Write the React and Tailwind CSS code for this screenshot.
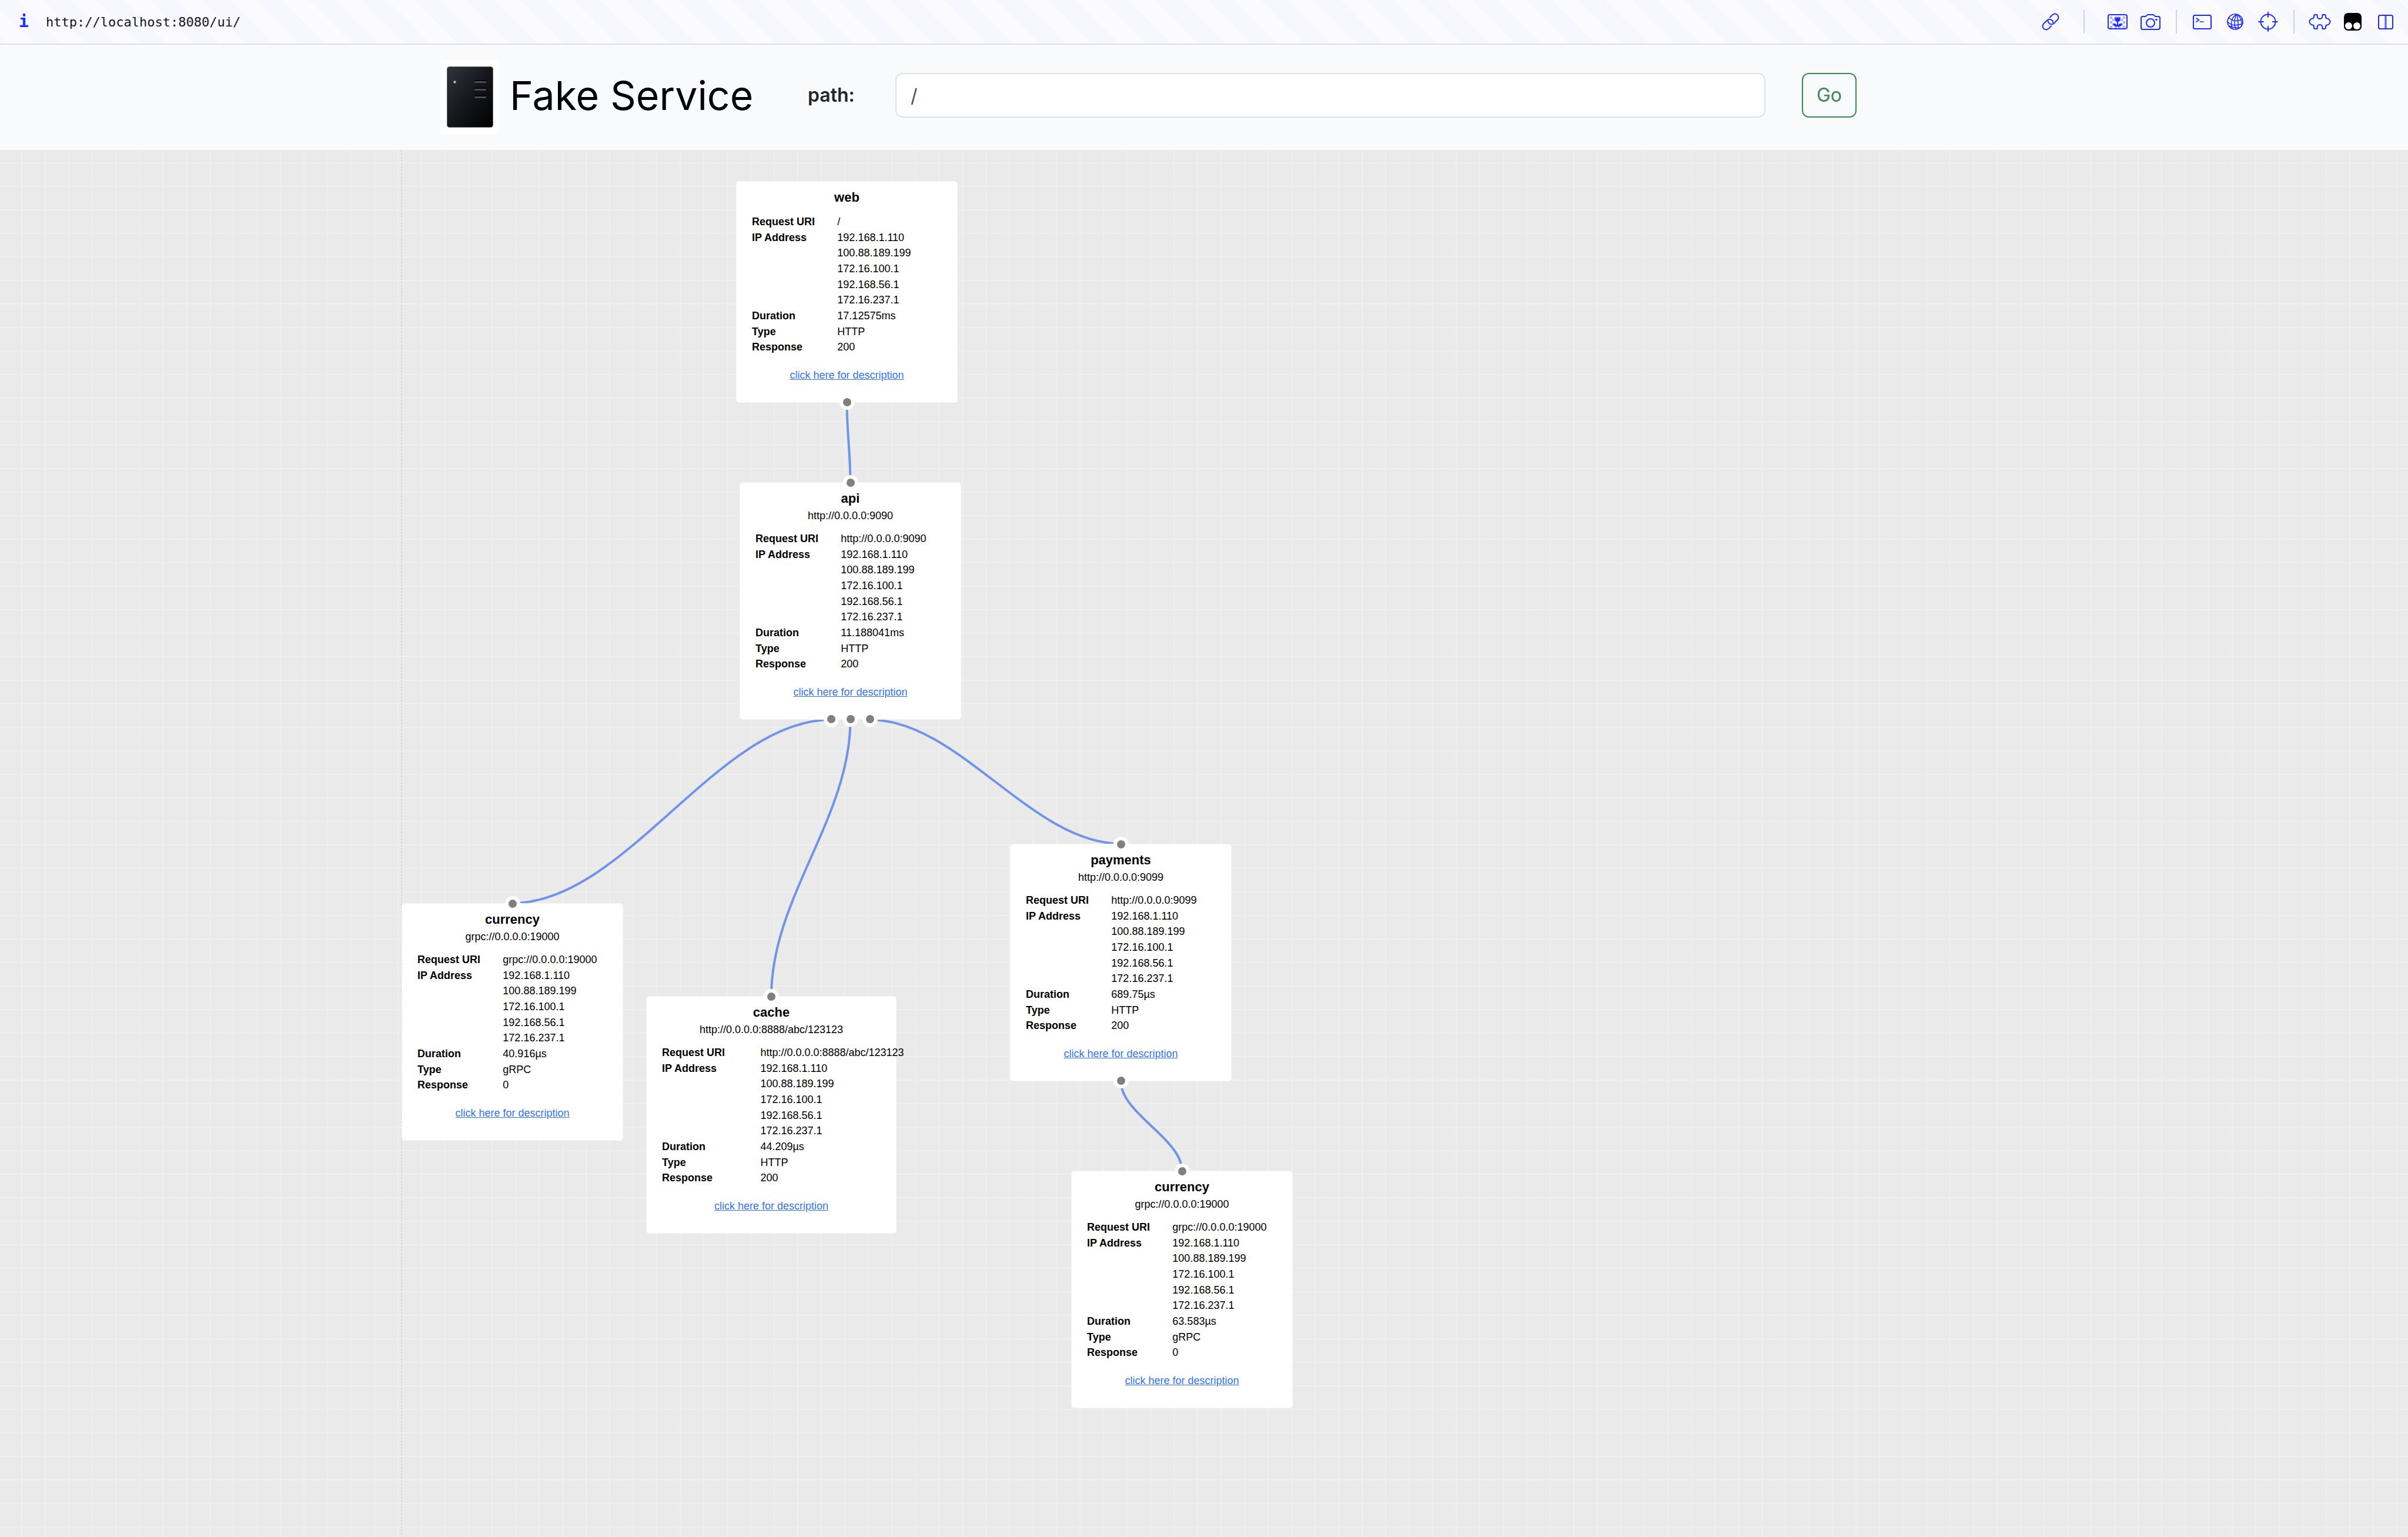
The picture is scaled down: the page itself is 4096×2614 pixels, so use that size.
import React from "react";

const CARD_FONT = "font-['Liberation_Sans',Arial,sans-serif]";

const IPS = ["192.168.1.110", "100.88.189.199", "172.16.100.1", "192.168.56.1", "172.16.237.1"];

const NODES = [
  { id: "web", name: "web", uri: "/", duration: "17.12575ms", type: "HTTP", response: "200", x: 1252, y: 53, w: 377, h: 377, inputs: 0, outputs: 1 },
  { id: "api", name: "api", host: "http://0.0.0.0:9090", uri: "http://0.0.0.0:9090", duration: "11.188041ms", type: "HTTP", response: "200", x: 1258, y: 565, w: 377, h: 404, inputs: 1, outputs: 3 },
  { id: "currency", name: "currency", host: "grpc://0.0.0.0:19000", uri: "grpc://0.0.0.0:19000", duration: "40.916µs", type: "gRPC", response: "0", x: 683, y: 1281, w: 377, h: 404, inputs: 1, outputs: 0 },
  { id: "cache", name: "cache", host: "http://0.0.0.0:8888/abc/123123", uri: "http://0.0.0.0:8888/abc/123123", duration: "44.209µs", type: "HTTP", response: "200", x: 1099, y: 1439, w: 426, h: 404, inputs: 1, outputs: 0 },
  { id: "payments", name: "payments", host: "http://0.0.0.0:9099", uri: "http://0.0.0.0:9099", duration: "689.75µs", type: "HTTP", response: "200", x: 1718, y: 1180, w: 377, h: 404, inputs: 1, outputs: 1 },
  { id: "currency-2", name: "currency", host: "grpc://0.0.0.0:19000", uri: "grpc://0.0.0.0:19000", duration: "63.583µs", type: "gRPC", response: "0", x: 1822, y: 1736, w: 377, h: 404, inputs: 1, outputs: 0 },
];

const LINKS = [
  ["web", 0, "api"],
  ["api", 0, "currency"],
  ["api", 1, "cache"],
  ["api", 2, "payments"],
  ["payments", 0, "currency-2"],
];

const PORT_STEP = 33;
const CURVE = 0.355;

function linkPath([fromId, port, toId]) {
  const from = NODES.find((n) => n.id === fromId);
  const to = NODES.find((n) => n.id === toId);
  const x1 = from.x + from.w / 2 + (port - (from.outputs - 1) / 2) * PORT_STEP;
  const y1 = from.y + from.h;
  const x2 = to.x + to.w / 2;
  const y2 = to.y;
  const dx = x2 - x1;
  const dy = y2 - y1;
  if (Math.abs(dx) > Math.abs(dy)) {
    return `M${x1} ${y1}C${x1 + dx * CURVE} ${y1} ${x2 - dx * CURVE} ${y2} ${x2} ${y2}`;
  }
  return `M${x1} ${y1}C${x1} ${y1 + dy * CURVE} ${x2} ${y2 - dy * CURVE} ${x2} ${y2}`;
}

function Ports({ count, edge }) {
  return (
    <div className={edge === "top" ? "absolute inset-x-0 -top-[13px] flex justify-center gap-[7px]" : "absolute inset-x-0 -bottom-[13px] flex justify-center gap-[7px]"}>
      {Array.from({ length: count }, (_, i) => (
        <span key={i} className="flex size-[26px] items-center justify-center rounded-full bg-white">
          <span className="size-[14px] rounded-full bg-[#808080]" />
        </span>
      ))}
    </div>
  );
}

function Row({ label, children }) {
  return (
    <>
      <dt className="font-bold">{label}</dt>
      <dd className="whitespace-nowrap">{children}</dd>
    </>
  );
}

function Node({ node }) {
  return (
    <article
      className={`absolute rounded-[5px] border border-[#f6f6f6] bg-white px-[26px] pt-[11px] pb-[32px] text-[18px] leading-[27px] text-black ${CARD_FONT}`}
      style={{ left: node.x, top: node.y, width: node.w }}
    >
      <h2 className="text-center text-[22px] leading-[32px] font-bold">{node.name}</h2>
      {node.host && <p className="text-center">{node.host}</p>}
      <dl className="mt-3 grid h-[240px] auto-rows-fr grid-cols-[45%_55%]">
        <Row label="Request URI">{node.uri}</Row>
        {IPS.map((ip, i) => (
          <Row key={ip} label={i === 0 ? "IP Address" : ""}>{ip}</Row>
        ))}
        <Row label="Duration">{node.duration}</Row>
        <Row label="Type">{node.type}</Row>
        <Row label="Response">{node.response}</Row>
      </dl>
      <p className="mt-[21px] text-center">
        <a href="#description" className="text-[#3471f0] underline">click here for description</a>
      </p>
      <Ports count={node.inputs} edge="top" />
      <Ports count={node.outputs} edge="bottom" />
    </article>
  );
}

function Icon({ label, children }) {
  return (
    <button type="button" aria-label={label} className="flex w-14 items-center justify-center text-[#1c2bff]">
      <svg viewBox="-20 -20 40 40" className="size-10" fill="none" stroke="currentColor" strokeWidth="2" strokeLinecap="round" strokeLinejoin="round">
        {children}
      </svg>
    </button>
  );
}

const CHECKS = [
  [-13, -9], [-13, -1], [-13, 7], [-9, -5], [-9, 3], [-5, -9], [-5, 7],
  [1, -9], [1, 7], [5, -5], [5, 3], [9, -9], [9, -1], [9, 7],
];

const LINK_HALF = "M2.1 3.9A6 6 0 0 0 -2.5 -6H-10.5A6 6 0 0 0 -10.5 6H-4.5";

function Toolbar() {
  return (
    <div className="flex h-[76px] items-center border-b-2 border-[#dedee6] bg-[linear-gradient(45deg,#fbfaff_25%,#f7f8ff_25%_50%,#fbfaff_50%_75%,#f7f8ff_75%)] bg-size-[90px_90px] bg-position-[30px_0px] pr-[10px] pl-[32px] font-['DejaVu_Sans_Mono',monospace]">
      <button type="button" aria-label="Site information" className="w-[46px] text-left text-[28px] leading-none font-bold text-[#1c2bff]">i</button>
      <input aria-label="Address" defaultValue="http://localhost:8080/ui/" className="min-w-0 flex-1 bg-transparent text-[22px] text-[#14171a] outline-none" />
      <Icon label="Copy link">
        <g transform="rotate(-45)">
          <path d={LINK_HALF} />
          <path d={LINK_HALF} transform="rotate(180)" />
        </g>
      </Icon>
      <span className="mx-7 h-10 w-0.5 bg-[#cdcffc]" />
      <Icon label="Images">
        <g fill="currentColor" stroke="none" opacity="0.35">
          {CHECKS.map(([x, y]) => <rect key={`${x},${y}`} x={x} y={y} width="4" height="4" />)}
        </g>
        <rect x="-16" y="-12" width="32" height="24" rx="3" />
        <g fill="currentColor" stroke="none">
          <path d="M-4.5 -8Q-3 -7.500 -2.300 -6L0 -8.500L2.300 -6Q3 -7.500 4.500 -8V-4Q4.500 -0.500 1 0V6Q3 2 8 3Q7 8 0 8.500Q-7 8 -8 3Q-3 2 -1 6V0Q-4.500 -0.500 -4.500 -4Z" />
        </g>
      </Icon>
      <Icon label="Screenshot">
        <path d="M-13 -9H-9Q-7.500 -9 -6.500 -10.500Q-5.500 -12 -4 -12H4Q5.500 -12 6.500 -10.500Q7.500 -9 9 -9H13Q16 -9 16 -6V10Q16 13 13 13H-13Q-16 13 -16 10V-6Q-16 -9 -13 -9Z" />
        <circle cx="0" cy="2" r="7" />
        <circle cx="10" cy="-3.500" r="1.700" fill="currentColor" stroke="none" />
      </Icon>
      <span className="mx-[15px] h-10 w-0.5 bg-[#cdcffc]" />
      <Icon label="Console">
        <rect x="-15" y="-11" width="30" height="23" rx="2.500" />
        <path d="M-10 -6L-5.500 -3L-10 0M-3.500 0H2" strokeWidth="1.700" />
      </Icon>
      <Icon label="Network">
        <circle r="13" strokeWidth="1.700" />
        <g strokeWidth="1.500">
          <path d="M3 -12.500C-6 -9 -8 2 -5 12M3 -12.500C-2 -7 -2 5 1 13M3 -12.500C4 -6 6 3 5 12M3 -12.500C9 -8 12 -2 11 7" />
          <path d="M-11 -7Q-2 2 12 -4M-13 0Q-4 10 13 3M-10 7Q-2 11 8 10" />
        </g>
      </Icon>
      <Icon label="Inspect">
        <circle r="12.500" />
        <path d="M0 -16V-8M0 8V16M-16 0H-8M8 0H16" />
      </Icon>
      <span className="mx-[15px] h-10 w-0.5 bg-[#cdcffc]" />
      <Icon label="Extensions">
        <path d="M-4.500 -12H-8Q-10 -12 -10 -10V-8Q-10 -6 -12 -5.500A5.500 5.500 0 0 0 -12 5.500Q-10 6 -10 8V10Q-10 12 -8 12H-4.500V9.500A4.500 4.500 0 0 1 4.500 9.500V12H8Q10 12 10 10V8Q10 6 12 5.500A5.500 5.500 0 0 0 12 -5.500Q10 -6 10 -8V-10Q10 -12 8 -12H4.500V-9.500A4.500 4.500 0 0 1 -4.500 -9.500Z" />
      </Icon>
      <Icon label="User scripts">
        <rect x="-15" y="-15" width="30" height="30" rx="7" fill="#000" stroke="none" />
        <circle cx="-7" cy="7" r="6" fill="#fff" stroke="none" />
        <circle cx="7" cy="7" r="6" fill="#fff" stroke="none" />
      </Icon>
      <Icon label="Split view">
        <rect x="-12" y="-11" width="24" height="23" rx="2.500" />
        <path d="M-0.900 -11V12M0.900 -11V12" strokeWidth="1.200" />
      </Icon>
    </div>
  );
}

function Logo() {
  return (
    <svg viewBox="0 0 99 127" className="h-[127px] w-[99px] shrink-0" role="img" aria-label="Server">
      <defs>
        <linearGradient id="tower" x1="0" y1="0" x2="1" y2="1">
          <stop offset="0" stopColor="#30343c" />
          <stop offset="0.500" stopColor="#15171b" />
          <stop offset="1" stopColor="#000" />
        </linearGradient>
        <radialGradient id="lamp">
          <stop offset="0" stopColor="#fff" />
          <stop offset="0.400" stopColor="#aaa" />
          <stop offset="1" stopColor="#444" stopOpacity="0" />
        </radialGradient>
      </defs>
      <rect width="99" height="127" fill="#fff" />
      <rect x="10.500" y="11.500" width="78" height="103" rx="4" fill="url(#tower)" stroke="#6b666c" strokeWidth="1" />
      <circle cx="23.500" cy="37.500" r="3.500" fill="url(#lamp)" />
      {[36, 49, 62].map((y) => (
        <g key={y}>
          <rect x="57" y={y - 2} width="20" height="2" fill="#050506" />
          <rect x="57" y={y} width="20" height="3" rx="1" fill="#4a4a54" />
        </g>
      ))}
    </svg>
  );
}

function Header() {
  return (
    <header className="bg-[#f8fafc] font-[Inter,sans-serif]">
      <form className="mx-auto flex h-[179px] max-w-[2640px] items-center pr-[210px] pl-[22px]" onSubmit={(e) => e.preventDefault()}>
        <Logo />
        <div className="flex flex-1 items-center pb-[7px] pl-[18px]">
          <h1 className="w-[507px] text-[68px] leading-none whitespace-nowrap text-black">Fake Service</h1>
          <label htmlFor="path" className="w-[149px] text-[32px] font-semibold text-[#212529]">path:</label>
          <input id="path" defaultValue="/" className="h-[76px] min-w-0 flex-1 rounded-xl border-2 border-[#dee2e8] bg-white px-6 text-[32px] text-[#495057] outline-none" />
          <button type="submit" className="ml-[62px] h-[76px] w-[93px] rounded-xl border-2 border-[#3d8759] text-[32px] text-[#3d8759]">Go</button>
        </div>
      </form>
    </header>
  );
}

export default function App() {
  return (
    <div className="flex min-h-screen flex-col">
      <Toolbar />
      <Header />
      <main className="relative min-h-[2200px] flex-1 overflow-hidden bg-[#eaeaea] bg-[linear-gradient(to_right,transparent_36px,#efefef_36px_38px,transparent_38px),linear-gradient(to_bottom,transparent_21px,#efefef_21px_23px,transparent_23px)] bg-size-[40px_40px]">
        <svg className="absolute inset-0 size-full" fill="none" aria-hidden="true">
          <line x1="683" y1="0" x2="683" y2="100%" stroke="#d8d8d8" strokeWidth="2" strokeDasharray="3 2.600" />
          {LINKS.map((link) => (
            <path key={link.join("-")} d={linkPath(link)} stroke="#6f94e8" strokeWidth="4" />
          ))}
        </svg>
        {NODES.map((node) => <Node key={node.id} node={node} />)}
      </main>
    </div>
  );
}
